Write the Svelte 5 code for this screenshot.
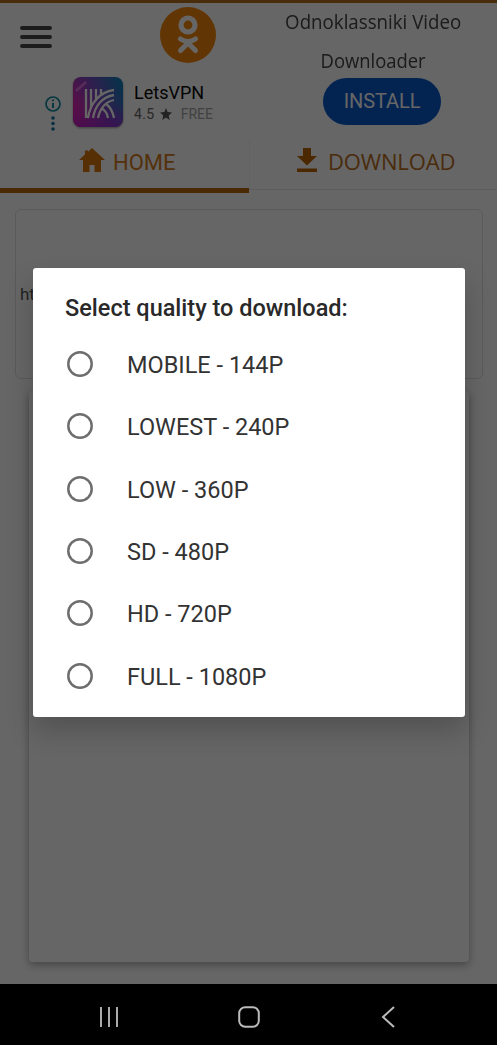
<script>
  const options = ['MOBILE - 144P', 'LOWEST - 240P', 'LOW - 360P', 'SD - 480P', 'HD - 720P', 'FULL - 1080P'];
</script>

<div class="screen">
  <main>
    <header>
      <div class="brand">
        <svg class="menu" viewBox="0 0 32 24" width="32" height="24"><path d="M2 3H30M2 12H30M2 21H30" stroke="#484848" stroke-width="3.9" stroke-linecap="round" /></svg>
        <svg class="logo" viewBox="0 0 56 56" width="56" height="56">
          <circle cx="28" cy="28" r="28" fill="#f5870a" />
          <g fill="none" stroke="#fff" stroke-linecap="round" stroke-linejoin="round">
            <circle cx="28" cy="18" r="7" stroke-width="5.2" />
            <path d="M20.5 32Q28 37 35.5 32M28 36L20.5 43.5M28 36L35.5 43.5" stroke-width="5" />
          </g>
        </svg>
      </div>
      <h1><span class="first">Odnoklassniki Video</span><span class="second">Downloader</span></h1>
    </header>
    <section class="ad">
      <div class="marks">
        <svg viewBox="0 0 18 38" width="18" height="38" fill="none" stroke="#138aa3">
          <circle cx="9" cy="9" r="7" stroke-width="1.7" /><path d="M9 8V13M9 4.6V6.2" stroke-width="2" />
          <g fill="#1773a0" stroke="none"><circle cx="9" cy="23" r="1.8" /><circle cx="9" cy="28.5" r="1.8" /><circle cx="9" cy="34" r="1.8" /></g>
        </svg>
      </div>
      <svg class="app" viewBox="0 0 50 50" width="50" height="50">
        <defs>
          <linearGradient id="ground" x1="0" y1=".7" x2="1" y2=".2"><stop stop-color="#f01fae" /><stop offset=".5" stop-color="#7c48c4" /><stop offset="1" stop-color="#147db9" /></linearGradient>
          <linearGradient id="shade" x1="0" y1="0" x2="0" y2="1"><stop offset=".55" stop-color="#9a22cf" stop-opacity="0" /><stop offset="1" stop-color="#9a22cf" stop-opacity=".6" /></linearGradient>
        </defs>
        <rect width="50" height="50" rx="8" fill="url(#ground)" /><rect width="50" height="50" rx="8" fill="url(#shade)" />
        <path d="M3 14L13 5" stroke="#d66ddb" stroke-width="3" />
        <g fill="none" stroke="#fff" stroke-width="2.3">
          <path d="M13 12V41M18 12V31M23 12V24M28 12V17M15 41C17 27 26 15 41 13M20 41C22 29 29 20 41 18M25 41C27 32 32 25 41 23M28 31Q34 34 35 41M33 27Q39 31 41 41" />
        </g>
      </svg>
      <div class="info"><strong>LetsVPN</strong><p>4.5 <svg viewBox="0 0 12 12" width="12" height="12"><path d="M6 0L7.6 4.1L12 4.5L8.7 7.4L9.7 12L6 9.5L2.3 12L3.3 7.4L0 4.5L4.4 4.1Z" fill="#555" /></svg><span>FREE</span></p></div>
      <button class="install">INSTALL</button>
    </section>
    <nav>
      <div class="tab active">
        <svg viewBox="0 0 26 24" width="26" height="24"><path d="M13 0L26 12H22V24H15.5V17H10.5V24H4V12H0L6 6.5V2.5H9V3.7Z" fill="#d9770a" /></svg><span>HOME</span>
      </div>
      <div class="tab download">
        <svg viewBox="0 0 20 24" width="20" height="24"><path d="M6 0H14V8H20L10 17.5L0 8H6ZM0 20.5H20V24H0Z" fill="#bd6500" /></svg><span>DOWNLOAD</span>
      </div>
    </nav>
    <section class="url">ht</section>
    <section class="card"></section>
  </main>
  <div class="overlay">
    <div class="dialog" role="dialog" aria-label="Select quality to download:">
      <h2>Select quality to download:</h2>
      {#each options as option}
        <div class="option">
          <svg viewBox="0 0 26 26" width="26" height="26"><circle cx="13" cy="13" r="11.7" fill="none" stroke="#6e6e6e" stroke-width="2.5" /></svg>
          <span>{option}</span>
        </div>
      {/each}
    </div>
  </div>
  <footer>
    <svg viewBox="0 0 20 22" width="20" height="22"><path d="M2 1V21M10 1V21M18 1V21" stroke="#aaa" stroke-width="2" /></svg>
    <svg viewBox="0 0 22 22" width="22" height="22"><rect x="1.2" y="1.2" width="19.6" height="19.6" rx="6" fill="none" stroke="#bbb" stroke-width="2" /></svg>
    <svg viewBox="0 0 14 22" width="14" height="22"><path d="M13 1L2 11L13 21" fill="none" stroke="#bbb" stroke-width="2" /></svg>
  </footer>
</div>

<style>
  :global(body) { margin: 0; }
  .screen { position: relative; width: 497px; height: 1045px; overflow: hidden; background: #000; font-family: Roboto, sans-serif; }
  main { height: 984px; box-sizing: border-box; background: #fff; border-top: 3px solid #b56e1c; overflow: hidden; }
  header { height: 71px; display: grid; grid-template-columns: 250px 247px; }
  .brand { display: flex; align-items: flex-start; }
  .menu { margin: 22px 0 0 20px; }
  .logo { margin: 4px 0 0 108px; }
  h1 { margin: 0; display: flex; flex-direction: column; align-items: center; font: 500 20px/38px "Open Sans", sans-serif; color: #444; white-space: nowrap; }
  h1 span { height: 39px; }
  .first { transform: scaleX(.935); }
  .second { transform: scaleX(.92); }
  .ad { height: 66px; display: flex; align-items: flex-start; }
  .marks { margin: 21px 0 0 44px; width: 18px; height: 38px; }
  .marks svg { display: block; }
  .app { margin: 3px 0 0 11px; filter: drop-shadow(0 1px 1px #999); }
  .info { margin: 7px 0 0 11px; width: 110px; }
  strong { display: block; font: 400 18px/24px Roboto, sans-serif; color: #080808; }
  p { display: flex; align-items: center; margin: 0; color: #666; font-size: 14px; line-height: 18px; letter-spacing: .4px; }
  p svg { margin: 0 9px 0 5px; }
  p span { color: #a3a3a3; letter-spacing: 0; }
  .install { margin: 4px 0 0 79px; padding: 0 0 2px; width: 118px; height: 47px; border: 0; border-radius: 24px; background: #0958cb; color: #fff; font: 400 20px Roboto, sans-serif; letter-spacing: -.1px; }
  nav { display: grid; grid-template-columns: 249px 248px; height: 53px; }
  .tab { display: flex; box-sizing: border-box; height: 53px; align-items: flex-start; padding: 8px 0 0 79px; font-size: 22px; line-height: 29px; color: #d17a20; border-bottom: 5px solid #bf660d; }
  .tab.download { height: 50px; padding-left: 47px; color: #b96d1d; border-bottom: 1px solid #e9e9e9; border-left: 1px solid #f4f4f4; }
  .tab span { margin-left: 8px; }
  .download span { margin-left: 11px; font-family: "Open Sans", sans-serif; line-height: 27px; letter-spacing: -.15px; }
  .url { box-sizing: border-box; width: 468px; height: 170px; margin: 16px 0 0 15px; border: 1px solid #e2e2e2; border-radius: 6px; padding: 74px 4px; font-size: 17px; line-height: 20px; color: #555; }
  .card { width: 440px; height: 571px; margin: 12px 0 0 29px; border-radius: 4px; background: #fff; box-shadow: 0 3px 9px #aaa; }
  .overlay { position: absolute; inset: 0 0 61px; display: flex; align-items: center; justify-content: center; background: rgba(0, 0, 0, .6); }
  .dialog { box-sizing: border-box; width: 432px; height: 449px; padding: 27px 32px 0; border-radius: 3px; background: #fff; box-shadow: 0 14px 28px rgba(0, 0, 0, .2); margin: 1px 0 0 1px; }
  h2 { margin: 0 0 12px; font: 500 23.5px/27px Roboto, sans-serif; color: #292929; height: 27px; white-space: nowrap; }
  .option { display: flex; align-items: center; height: 62.3px; color: #333; font-size: 23.5px; line-height: 28px; }
  h2 + .option { margin-top: -1px; }
  .option svg { margin-left: 2px; }
  .option span { margin-left: 34px; padding-top: 2px; }
  footer { display: flex; height: 61px; background: #000; align-items: flex-start; }
  footer svg { margin-top: 22px; }
  footer svg:first-child { margin-left: 99px; }
  footer svg:nth-child(2) { margin-left: 119px; }
  footer svg:nth-child(3) { margin-left: 121px; }
</style>
